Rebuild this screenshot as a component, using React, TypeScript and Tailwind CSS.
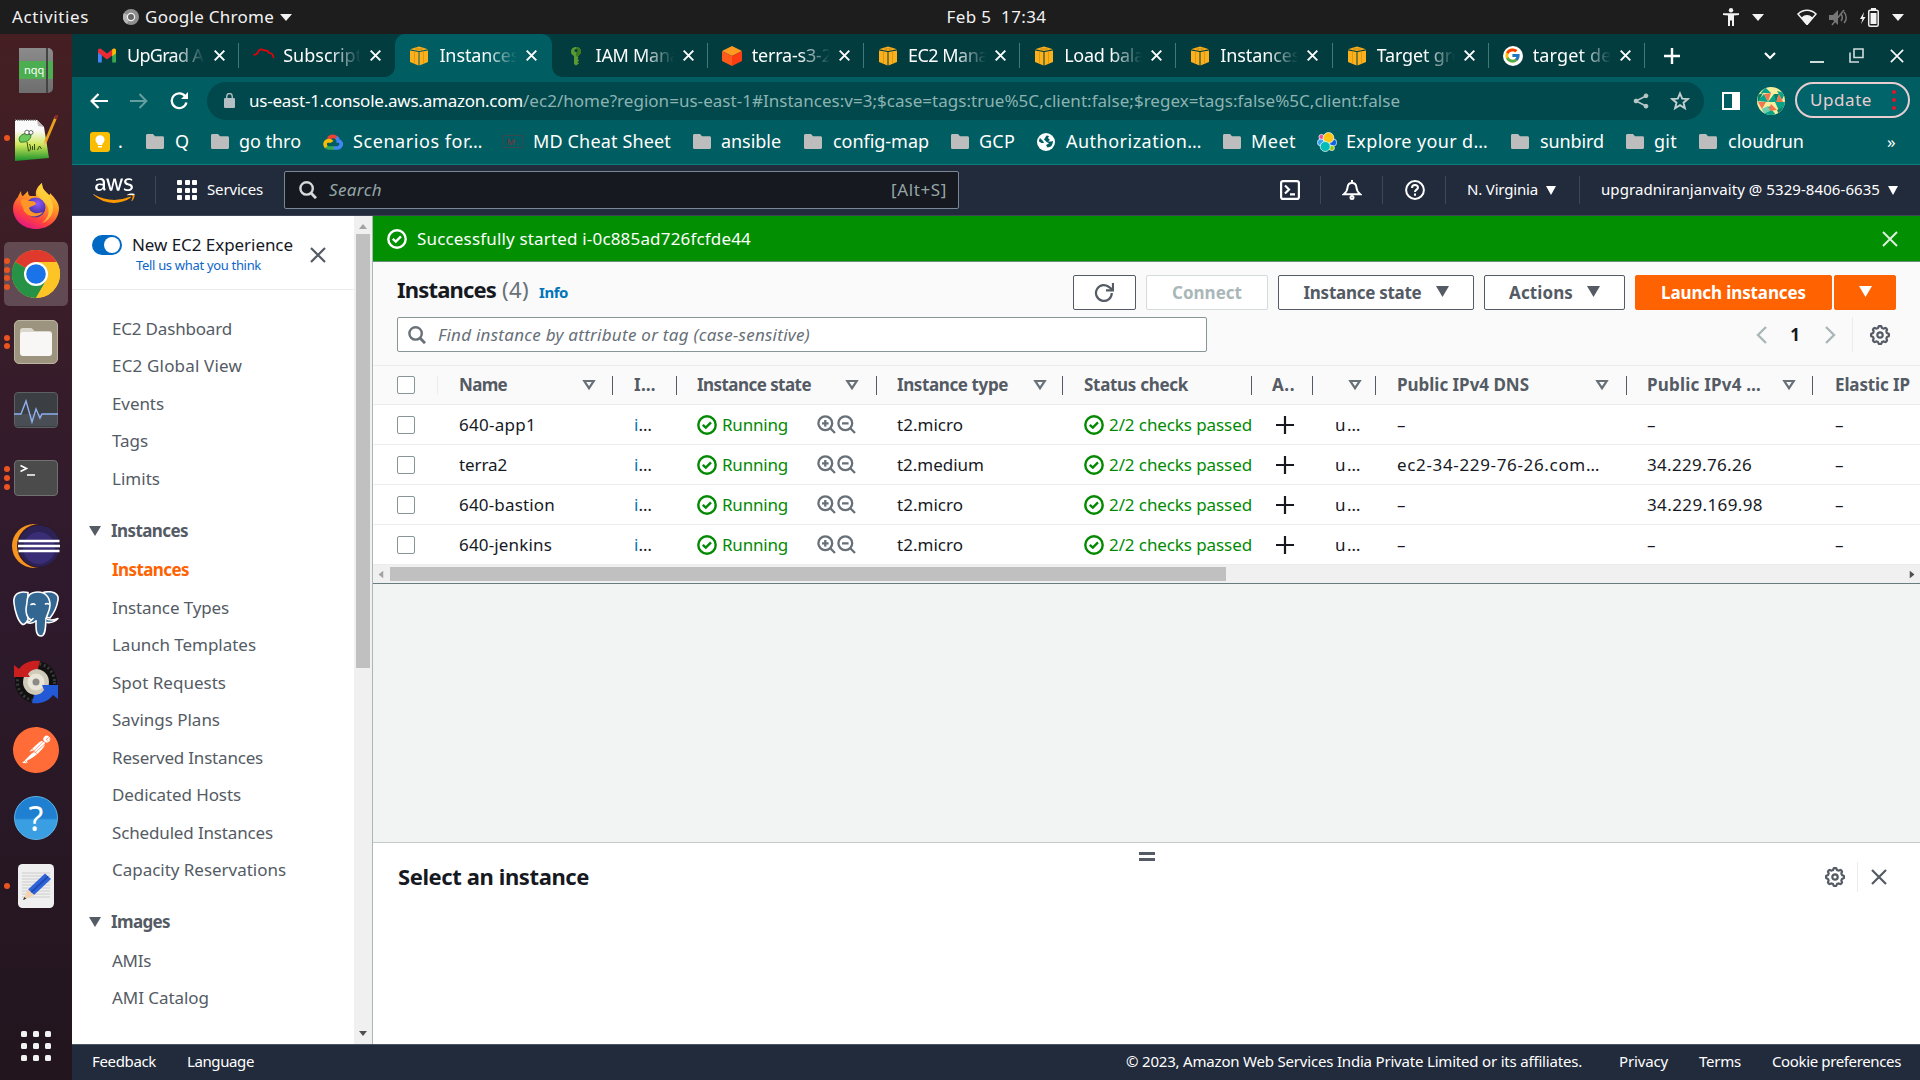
import { useLayoutEffect, useRef, type ReactNode } from "react";
import { SiPostman } from "react-icons/si";
import { FcGoogle } from "react-icons/fc";
import { FaAws } from "react-icons/fa";

/* Text that spreads its letters so that the run is exactly `w` pixels wide. */
function Fit({ w, className = "", children }: { w: number; className?: string; children: string }) {
  const ref = useRef<HTMLSpanElement>(null);
  useLayoutEffect(() => {
    const el = ref.current;
    if (!el) return;
    el.style.letterSpacing = "0px";
    const natural = el.getBoundingClientRect().width;
    el.style.letterSpacing = `${(w - natural) / children.length}px`;
  }, [w, children]);
  return (
    <span ref={ref} className={`inline-block shrink-0 whitespace-pre ${className}`}>
      {children}
    </span>
  );
}

/* ---------- small icons ---------- */

const Caret = ({ className = "" }: { className?: string }) => (
  <svg viewBox="0 0 12 10" preserveAspectRatio="none" className={`shrink-0 ${className}`} fill="currentColor">
    <path d="M0 0h12L6 10z" />
  </svg>
);

const SortIcon = () => (
  <svg viewBox="0 0 14 12" className="h-3 w-3.5 shrink-0 text-[#687078]" fill="none" stroke="currentColor" strokeWidth="2.200">
    <path d="M2.300 2h9.400L7 9.200z" />
  </svg>
);

const Cross = ({ className = "", sw = 2 }: { className?: string; sw?: number }) => (
  <svg viewBox="0 0 16 16" className={`shrink-0 ${className}`} fill="none" stroke="currentColor" strokeWidth={sw}>
    <path d="M1 1l14 14M15 1L1 15" />
  </svg>
);

const CheckCircle = () => (
  <svg viewBox="0 0 20 20" className="size-5 shrink-0" fill="none" stroke="currentColor" strokeWidth="2.400">
    <circle cx="10" cy="10" r="8.700" />
    <path d="M5.800 9.800l3 2.800 5.200-5.200" />
  </svg>
);

const Magnifier = ({ className = "" }: { className?: string }) => (
  <svg viewBox="0 0 18 18" className={`shrink-0 ${className}`} fill="none" stroke="currentColor" strokeWidth="2.400">
    <circle cx="7.600" cy="7.400" r="6.200" />
    <path d="M12 12l5 5.200" strokeWidth="2.800" />
  </svg>
);

const ZoomGlass = ({ plus = false }: { plus?: boolean }) => (
  <svg viewBox="0 0 19 19" className="size-[19px] shrink-0 text-[#687078]" fill="none" stroke="currentColor" strokeWidth="2.300">
    <circle cx="8.300" cy="8.300" r="6.900" />
    <path d="M13.300 13.300l4.700 4.700M5 8.300h6.600" />
    {plus && <path d="M8.300 5v6.600" />}
  </svg>
);

const gearPath =
  Array.from({ length: 97 }, (_, i) => {
    const a = (i / 96) * Math.PI * 2;
    const r = 8.1 + 0.95 * Math.tanh(2 * Math.cos(8 * a));
    return `${i ? "L" : "M"}${(10 + r * Math.sin(a)).toFixed(2)} ${(10 - r * Math.cos(a)).toFixed(2)}`;
  }).join("") + "z";

const Gear = () => (
  <svg viewBox="0 0 20 20" className="size-5 shrink-0 text-[#545b64]" fill="none" stroke="currentColor" strokeWidth="2.200">
    <path d={gearPath} />
    <circle cx="10" cy="10" r="2.700" />
  </svg>
);

/* ---------- favicons ---------- */

const CubeIcon = () => (
  <svg viewBox="0 0 20 20" className="size-5 shrink-0">
    <path d="M1 4.400l8.500 1.600V19.500L1 16zM19 4.400l-8.500 1.600V19.500L19 16z" fill="#fbb01c" />
    <path d="M1 3.200L10 .6l9 2.600L10 5z" fill="#fbb01c" />
    <path d="M5.500 5.500v12.300M14.500 5.500v12.300" stroke="#d8930f" strokeWidth=".8" />
    <path d="M5.500 1.900l9 2.200M14.500 1.900l-9 2.200" stroke="#c98a12" strokeWidth=".6" />
  </svg>
);

const GmailIcon = () => (
  <svg viewBox="0 0 20 16" className="h-4 w-5 shrink-0">
    <path d="M1 3v11.500h3.800V6z" fill="#4285f4" />
    <path d="M19 3v11.500h-3.800V6z" fill="#34a853" />
    <path d="M1 2.600C1 .6 3 0 4.600 1.200L10 5.400l5.400-4.200C17 0 19 .6 19 2.600v2L10 11.500 1 4.600z" fill="#ea2a35" />
    <path d="M15.200 1.400C17-.1 19 .7 19 2.700v2.600l-3.800 2.900z" fill="#fbbc04" />
  </svg>
);

const RedHatIcon = () => (
  <svg viewBox="0 0 22 20" className="h-5 w-[22px] shrink-0" fill="none" stroke="#e8000b" strokeWidth="1.700">
    <path d="M.5 9.500C2 8 3.500 9 4.500 7c.8-2 1.500-4 4-3.700 1.500.2 2 1.200 3.200 1C14 4.200 15.500 5 16 7c2.800 0 4.400 2 4.500 5" />
  </svg>
);

const KeyIcon = () => (
  <svg viewBox="0 0 20 20" className="size-5 shrink-0">
    <path d="M10 1C6.500 1 4.800 3.500 5 6c.2 2 1.500 3.400 3 3.900V18l2 1.500 3-2-1.500-1.500 1.700-1.500-1.700-1.500 1-1.300-1-1.800c2-.6 3.500-2.400 3.500-4.400C15 3 13 1 10 1z" fill="#5a9a32" />
    <path d="M10 1c3 0 5 2 5 5-.3 2-1.500 3.600-3.300 4.200H10z" fill="#3f7a22" />
    <circle cx="10" cy="4.600" r="1.500" fill="#023c3f" />
  </svg>
);

const S3Icon = () => (
  <svg viewBox="0 0 20 20" className="size-5 shrink-0">
    <path d="M10 0l10 5-10 5L0 5z" fill="#ff9a20" />
    <path d="M0 5l10 5v10L0 15z" fill="#ff5a1a" />
    <path d="M20 5l-10 5v10l10-5z" fill="#ff3d12" />
  </svg>
);

const GoogleIcon = () => (
  <span className="flex size-5 shrink-0 items-center justify-center rounded-full bg-white">
    <FcGoogle className="size-[17px]" />
  </span>
);

/* ---------- browser tabs ---------- */

const tabs: { title: string; w: number; icon: ReactNode; active?: boolean; line?: boolean }[] = [
  { title: "UpGrad A", w: 76, icon: <GmailIcon />, line: true },
  { title: "Subscript", w: 79, icon: <RedHatIcon /> },
  { title: "Instances", w: 80, icon: <CubeIcon />, active: true },
  { title: "IAM Mana", w: 84, icon: <KeyIcon />, line: true },
  { title: "terra-s3-2", w: 80, icon: <S3Icon />, line: true },
  { title: "EC2 Mana", w: 80, icon: <CubeIcon />, line: true },
  { title: "Load bala", w: 80, icon: <CubeIcon />, line: true },
  { title: "Instances", w: 80, icon: <CubeIcon />, line: true },
  { title: "Target gro", w: 86, icon: <CubeIcon />, line: true },
  { title: "target de", w: 79, icon: <GoogleIcon />, line: true },
];

function TabStrip() {
  return (
    <div className="flex h-[43px] shrink-0 items-center bg-[#023c3f] pl-[11px] text-white">
      {tabs.map((t, i) => (
        <div
          key={i}
          className={
            t.active
              ? "relative flex h-full w-[156.200px] items-center rounded-t-[10px] bg-[#005d61] pl-[14px]"
              : "relative flex h-full w-[156.200px] items-center pl-[14px]"
          }
        >
          {t.active && (
            <>
              <span className="absolute bottom-0 -left-2.5 size-2.5 bg-[radial-gradient(circle_at_0_0,transparent_9.500px,#005d61_10px)]" />
              <span className="absolute -right-2.5 bottom-0 size-2.5 bg-[radial-gradient(circle_at_100%_0,transparent_9.500px,#005d61_10px)]" />
            </>
          )}
          <span className="flex w-[30px] shrink-0 items-center">{t.icon}</span>
          <span className="w-[78px] overflow-hidden text-[18px] [mask-image:linear-gradient(to_right,#000_60%,transparent_100%)]">
            <Fit w={t.w}>{t.title}</Fit>
          </span>
          <Cross className="ml-[9px] size-[11px]" sw={2.800} />
          {t.line && <span className="absolute top-[9px] right-0 h-[25px] w-px bg-[#3f7a7b]" />}
        </div>
      ))}
      <div className="flex flex-1 items-center pl-[19px]">
        <svg viewBox="0 0 16 16" className="size-4" stroke="currentColor" strokeWidth="2.400">
          <path d="M8 0v16M0 8h16" />
        </svg>
        <svg viewBox="0 0 12 8" className="ml-[84px] h-2 w-3" fill="none" stroke="currentColor" strokeWidth="2.200">
          <path d="M1 1l5 5 5-5" />
        </svg>
        <span className="mt-3 ml-[34px] h-0.5 w-[14px] bg-[#cfdcdc]" />
        <svg viewBox="0 0 15 15" className="ml-[25px] size-[15px] text-[#cfdcdc]" fill="none" stroke="currentColor" strokeWidth="1.600">
          <path d="M5 1h9v8.500H5zM1 4.500V14h9" />
        </svg>
        <Cross className="ml-[26px] size-[14px]" sw={1.800} />
      </div>
    </div>
  );
}

const Avatar = () => (
  <svg viewBox="0 0 28 28" className="ml-[17px] size-7 shrink-0">
    <defs>
      <clipPath id="avatar">
        <circle cx="14" cy="14" r="14" />
      </clipPath>
    </defs>
    <g clipPath="url(#avatar)">
      <rect width="28" height="28" fill="#f6ee9c" />
      <path d="M8 0l6 6H4zM20 4l8 2-3 7zM0 14l7-7 4 8zM11 15l6-8 6 8zM18 15h10v7l-6 2zM6 28l6-9 7 9z" fill="#0aa38a" />
      <path d="M7 7l7-1-3 9zM22 7l4 8h-7zM1 15h8l-4 7zM14 17l6 6-9 1z" fill="#f0784f" />
      <path d="M0 8l6-2-5 9zM17 7l5 0-3 7zM20 23l6-3-4 8z" fill="#0b7f66" />
      <path d="M5 22l6-3 2 5-6 3z" fill="#6fd0b0" />
    </g>
  </svg>
);

function Toolbar() {
  return (
    <div className="flex h-[47px] shrink-0 items-center bg-[#005d61] text-white">
      <svg viewBox="0 0 18 16" className="ml-[18px] h-4 w-[18px]" fill="none" stroke="currentColor" strokeWidth="2.200">
        <path d="M18 8H2M8.500 1L1.600 8l6.900 7" />
      </svg>
      <svg viewBox="0 0 18 16" className="ml-[22px] h-4 w-[18px] text-[#669ea0]" fill="none" stroke="currentColor" strokeWidth="2">
        <path d="M0 8h16M9.500 1l6.900 7-6.900 7" />
      </svg>
      <svg viewBox="0 0 18 18" className="ml-[22px] size-[18px]" fill="none" stroke="currentColor" strokeWidth="2.300">
        <path d="M15.600 5A7.400 7.400 0 1 0 16.400 10.500" />
        <path d="M18 0v7h-7z" fill="currentColor" stroke="none" />
      </svg>
      <div className="ml-[19px] flex h-[38px] w-[1497px] items-center rounded-full bg-[#01484c] pr-[14px] pl-[17px] text-[17px]">
        <svg viewBox="0 0 12 15" className="mr-[14px] h-[15px] w-[11px] text-[#b4bfc4]" preserveAspectRatio="none">
          <rect y="5" width="12" height="10" rx="1.200" fill="currentColor" />
          <path d="M3 6V3.500a3 3 0 0 1 6 0V6" fill="none" stroke="currentColor" strokeWidth="1.500" />
        </svg>
        <Fit w={274}>us-east-1.console.aws.amazon.com</Fit>
        <Fit w={877} className="text-[#8cb3b2]">
          /ec2/home?region=us-east-1#Instances:v=3;$case=tags:true%5C,client:false;$regex=tags:false%5C,client:false
        </Fit>
        <svg viewBox="0 0 16 16" className="ml-auto size-4 text-[#b9c8c8]" fill="currentColor" stroke="currentColor">
          <path d="M13 3L3 8l10 5" fill="none" strokeWidth="1.600" />
          <circle cx="13" cy="2.800" r="1.900" />
          <circle cx="3" cy="8" r="1.900" />
          <circle cx="13" cy="13.200" r="1.900" />
        </svg>
        <svg viewBox="0 0 20 20" className="ml-[21px] size-5 text-[#c3d0d0]" fill="none" stroke="currentColor" strokeWidth="1.900">
          <path d="M10 2.500l2.200 5.200 5.600.4-4.300 3.600 1.400 5.500L10 14.200l-4.900 3 1.400-5.500L2.200 8.100l5.600-.4z" />
        </svg>
      </div>
      <span className="ml-[18px] box-border h-[18px] w-[18px] border-[2.500px] border-r-8 border-white" />
      <Avatar />
      <div className="mb-px ml-[10px] flex h-9 w-[115px] items-center rounded-full border-2 border-[#e9cdd0] bg-[#01646a] pl-[13px] text-[17px] text-[#e9cdd0]">
        <Fit w={62}>Update</Fit>
        <span className="ml-[20px] flex flex-col gap-1">
          <i className="size-1 rounded-full bg-[#e8132a]" />
          <i className="size-1 rounded-full bg-[#e8132a]" />
          <i className="size-1 rounded-full bg-[#e8132a]" />
        </span>
      </div>
    </div>
  );
}

/* ---------- bookmarks ---------- */

const Folder = () => (
  <svg viewBox="0 0 18 15" className="h-[15px] w-[18px] shrink-0">
    <path d="M0 1.500C0 .6.600 0 1.500 0H7l2 2.300h7.500c.9 0 1.500.6 1.500 1.500v9.700c0 .9-.6 1.500-1.500 1.500h-15C.6 15 0 14.400 0 13.500z" fill="#bdbdbd" />
  </svg>
);

const Keep = () => (
  <span className="flex size-5 items-center justify-center rounded-[3px] bg-[#fbbc04]">
    <svg viewBox="0 0 10 13" className="h-[13px] w-2.5" fill="#fff">
      <circle cx="5" cy="4.700" r="4.500" />
      <path d="M2.700 8h4.600v2H2.700zM3 11h4v1.600H3z" />
    </svg>
  </span>
);

const GCloud = () => (
  <svg viewBox="0 0 20 16" className="h-4 w-5" fill="none" strokeWidth="3.600">
    <path d="M5.500 5A5 5 0 0 1 14 4.500" stroke="#ea4335" />
    <path d="M13.500 3.500c1.500 1.200 1.700 2.500 1.700 3.500 2.600 0 3.600 2.500 2.800 4.700" stroke="#4285f4" />
    <path d="M18 11c-.6 2-2 3-4 3H10" stroke="#4285f4" />
    <path d="M11 14H6c-1.500 0-2.500-.5-3.200-1.600" stroke="#34a853" />
    <path d="M3.300 13C1 10.500 2 6.800 6 6.600c1.500 0 2.400.6 3 1.400" stroke="#fbbc04" />
  </svg>
);

const MdIcon = () => (
  <span className="flex h-[13px] w-5 items-center justify-center border border-[#39484b] text-[9px] font-bold text-[#5b3f44]">M↓</span>
);

const Globe = () => (
  <svg viewBox="0 0 18 18" className="size-[18px]">
    <circle cx="9" cy="9" r="9" fill="#fff" />
    <path d="M3 5l3 3 1 2H4.500L2 8.500C2 7 2.500 6 3 5zM9.500 2.500l2.500.5-1 2 2 2-2 1.500h3l2-.500c0 2-1 4.500-2.500 5.800l-3 .7L9 12l3-1.500-3-2-2-2z" fill="#005d61" />
  </svg>
);

const Elastic = () => (
  <svg viewBox="0 0 20 20" className="size-5" stroke="#fff" strokeWidth=".7">
    <circle cx="4.500" cy="5" r="2.600" fill="#f04e98" />
    <circle cx="3.800" cy="10.500" r="3.400" fill="#36a2ef" />
    <circle cx="16" cy="10.500" r="3.700" fill="#0b64dd" />
    <circle cx="14.800" cy="16" r="2.600" fill="#93c90e" />
    <circle cx="11.500" cy="5.800" r="5.300" fill="#fec514" />
    <circle cx="8.200" cy="14.500" r="5" fill="#02bcb7" />
  </svg>
);

const bookmarks: { t: string; w: number; cell: string; icon?: ReactNode }[] = [
  { t: ".", w: 5, cell: "w-[56px] gap-[8px]", icon: <Keep /> },
  { t: "Q", w: 14, cell: "w-[65px] gap-[11px]" },
  { t: "go thro", w: 62, cell: "w-[112px] gap-[10px]" },
  { t: "Scenarios for…", w: 130, cell: "w-[180px] gap-[10px]", icon: <GCloud /> },
  { t: "MD Cheat Sheet", w: 138, cell: "w-[190px] gap-[10px]", icon: <MdIcon /> },
  { t: "ansible", w: 60, cell: "w-[111px] gap-[10px]" },
  { t: "config-map", w: 96, cell: "w-[147px] gap-[11px]" },
  { t: "GCP", w: 36, cell: "w-[86px] gap-[10px]" },
  { t: "Authorization…", w: 136, cell: "w-[186px] gap-[11px]", icon: <Globe /> },
  { t: "Meet", w: 45, cell: "w-[94px] gap-[10px]" },
  { t: "Explore your d…", w: 142, cell: "w-[194px] gap-[9px]", icon: <Elastic /> },
  { t: "sunbird", w: 64, cell: "w-[115px] gap-[11px]" },
  { t: "git", w: 23, cell: "w-[73px] gap-[10px]" },
  { t: "cloudrun", w: 76, cell: "w-[188px] gap-[11px]" },
];

function Bookmarks() {
  return (
    <div className="flex h-[41px] shrink-0 items-center border-b border-[#0b7f7d] bg-[#005d61] pb-[5px] pl-[18px] text-[18px] text-white">
      {bookmarks.map((b) => (
        <div key={b.t} className={`flex shrink-0 items-center ${b.cell}`}>
          {b.icon ?? <Folder />}
          <Fit w={b.w}>{b.t}</Fit>
        </div>
      ))}
      <span className="text-[17px]">»</span>
    </div>
  );
}

/* ---------- desktop ---------- */

function TopBar() {
  return (
    <header className="grid h-[34px] shrink-0 grid-cols-3 items-center bg-[#1d1d1d] text-[17px] text-[#f2f2f2]">
      <div className="flex items-center pl-3">
        <Fit w={77}>Activities</Fit>
        <svg viewBox="0 0 16 16" className="ml-[34px] size-4">
          <circle cx="8" cy="8" r="8" fill="#8f8f8f" />
          <path d="M8 8L1 4a8 8 0 0 0 3 11z" fill="#b5b5b5" />
          <circle cx="8" cy="8" r="3.600" fill="#666" stroke="#f5f5f5" strokeWidth="1.200" />
        </svg>
        <Fit w={129} className="ml-[6px]">Google Chrome</Fit>
        <Caret className="ml-[6px] h-[7px] w-3" />
      </div>
      <div className="flex justify-center pl-[73px]">
        <Fit w={100}>Feb 5  17:34</Fit>
      </div>
      <div className="flex items-center justify-end pr-[16px]">
        <svg viewBox="0 0 16 18" className="h-[18px] w-4" fill="currentColor">
          <circle cx="8" cy="2.300" r="2.200" />
          <path d="M0 5.200h16v1.700l-5 .7V18H9v-5.500H7V18H5V7.600L0 6.900z" />
        </svg>
        <Caret className="ml-[13px] h-[7px] w-3" />
        <svg viewBox="0 0 20 16" className="ml-[33px] h-4 w-5" fill="none" stroke="currentColor" strokeWidth="1.500">
          <path d="M1 5a12.500 12.500 0 0 1 18 0l-9 10.500z" />
          <path d="M5 9c3-3 7-3 10 0l-5 6z" fill="currentColor" />
        </svg>
        <svg viewBox="0 0 19 17" className="ml-[12px] h-[17px] w-[19px] text-[#777]" fill="none" stroke="currentColor" strokeWidth="1.500">
          <path d="M0 6h4l5-5v15l-5-5H0z" fill="currentColor" stroke="none" />
          <path d="M12 5c1.500 2 1.500 5 0 7M15 3c3 3.500 3 8 0 11M3 16L15 1" />
        </svg>
        <svg viewBox="0 0 19 19" className="ml-[12px] h-[19px] w-[19px]">
          <path d="M4 4L0 11h2.500L1 16l4.500-7H3z" fill="currentColor" />
          <rect x="8.700" y="2.200" width="9.500" height="16" rx="1.500" fill="none" stroke="currentColor" strokeWidth="1.500" />
          <path d="M11 0h5v2h-5zM10.500 5h6v11h-6z" fill="currentColor" />
        </svg>
        <Caret className="ml-[13px] h-[7px] w-3" />
      </div>
    </header>
  );
}

const dock: { dots: number; active?: boolean; icon: ReactNode }[] = [
  {
    dots: 0,
    icon: (
      <div className="relative flex h-[45px] w-[34px] items-center overflow-hidden rounded-r-[5px] bg-gradient-to-b from-[#8b8b8b] to-[#6e6e6e]">
        <span className="h-[18px] w-full bg-[#4cae50] pl-[5px] text-[11px] leading-[17px] text-white">nqq</span>
        <span className="absolute inset-y-0 right-[5px] w-0.5 bg-[#444]" />
      </div>
    ),
  },
  {
    dots: 1,
    icon: (
      <svg viewBox="0 0 46 46" className="size-[46px]">
        <defs>
          <linearGradient id="pad" x2="0" y2="1">
            <stop offset=".25" stopColor="#fafafa" />
            <stop offset=".6" stopColor="#cfe85a" />
            <stop offset="1" stopColor="#18912b" />
          </linearGradient>
        </defs>
        <path d="M2 5h22l7 7 5 31-34 3z" fill="url(#pad)" />
        <path d="M24 5l7 7-6-1z" fill="#bbb" />
        <path d="M2 5h22" stroke="#666" strokeWidth="2" strokeDasharray="1 1.200" />
        <path d="M6 24c1-5 7-7 12-4 0 5-5 8-11 7z" fill="#6cc85a" stroke="#256b1c" strokeWidth=".8" />
        <circle cx="14" cy="17.500" r="2.300" fill="#fff" stroke="#333" strokeWidth=".7" />
        <circle cx="18" cy="17.500" r="2" fill="#fff" stroke="#333" strokeWidth=".7" />
        <path d="M14 27l1.500 9c2 0 3-3 1-7m3 6v-4m2 4v-6m3 6l2-4 2 3" fill="none" stroke="#414b12" strokeWidth="1" />
        <path d="M43 2L32 28" stroke="#e9a21c" strokeWidth="2.800" />
        <path d="M44 0l-1.500 4" stroke="#8d2b2b" strokeWidth="3" />
        <path d="M32.500 26l-2 5" stroke="#eac07b" strokeWidth="1.500" />
      </svg>
    ),
  },
  {
    dots: 0,
    icon: (
      <svg viewBox="0 0 46 46" className="size-[46px]">
        <defs>
          <linearGradient id="fox" x1=".8" y1="0" x2=".3" y2="1">
            <stop offset="0" stopColor="#ffe84a" />
            <stop offset=".4" stopColor="#ff9a24" />
            <stop offset=".75" stopColor="#ff4040" />
            <stop offset="1" stopColor="#e31587" />
          </linearGradient>
          <radialGradient id="orb" cx=".6" cy=".3">
            <stop offset="0" stopColor="#9059ff" />
            <stop offset="1" stopColor="#4a36a8" />
          </radialGradient>
        </defs>
        <path d="M5 14c1-3 2-4 3-6 0 3 1 5 2 5l5-5c0 4 1 5 3 5h5c-1-6 2-10 6-13 0 6 3 8 7 12 1 0 1-1 1-2 5 5 9 10 9 15 0 12-10 21-23 21S0 37 0 25c0-4 2-8 5-11z" fill="url(#fox)" />
        <path d="M24 11c1-6 2-8 5-11 0 6 3 8 7 12l3 7c4 10-3 19-10 21 8-6 8-14 4-19-3-4-6-5-9-10z" fill="#ffd23c" opacity=".8" />
        <circle cx="22.500" cy="24.500" r="10" fill="url(#orb)" />
        <path d="M8 17c4-2 6 1 9 1 4 0 6 1 6 3-1 2-4 1-7 4 2 6 9 6 14 4-4 6-15 6-19-1-1-3-1-5-3-7z" fill="#ff9626" />
      </svg>
    ),
  },
  {
    dots: 4,
    active: true,
    icon: (
      <svg viewBox="0 0 48 48" className="size-12">
        <circle cx="24" cy="24" r="24" fill="#fcc424" />
        <path d="M24 24L3.200 12A24 24 0 0 1 44.800 12z" fill="#e03a2f" />
        <path d="M24 24L3.200 12A24 24 0 0 0 24 48l10.400-18z" fill="#259246" />
        <path d="M24 12h20.800A24 24 0 0 1 24 48l10.400-18z" fill="#fcc424" />
        <circle cx="24" cy="24" r="12" fill="#fff" />
        <circle cx="24" cy="24" r="9.800" fill="#1a73e8" />
      </svg>
    ),
  },
  {
    dots: 2,
    icon: (
      <div className="flex size-11 items-center justify-center rounded-[5px] border border-[#bcb4a1] bg-[#9d9480]">
        <svg viewBox="0 0 32 28" className="h-7 w-8">
          <path d="M0 3c0-2 1-3 3-3h8c2 0 2 3 4 3h14c2 0 3 1 3 3H0z" fill="#dcd7cd" />
          <rect y="4" width="32" height="24" rx="3" fill="#f8f7f5" />
        </svg>
      </div>
    ),
  },
  {
    dots: 0,
    icon: (
      <svg viewBox="0 0 44 36" className="h-9 w-11">
        <rect x=".5" y=".5" width="43" height="35" rx="3.500" fill="#3b3e42" stroke="#5d6063" />
        <path d="M1 22h42v12H1z" fill="#494e55" />
        <path d="M0 22h7l5-13 6 21 4-13 4 9 2-4h16" fill="none" stroke="#8fb0ef" strokeWidth="1.400" />
      </svg>
    ),
  },
  {
    dots: 3,
    icon: (
      <svg viewBox="0 0 44 36" className="h-9 w-11">
        <rect x=".5" y=".5" width="43" height="35" rx="3.500" fill="#4b4b4b" stroke="#717171" />
        <path d="M6.500 5.500l6 3-6 3M13 15h8" fill="none" stroke="#fff" strokeWidth="1.600" />
      </svg>
    ),
  },
  {
    dots: 0,
    icon: (
      <svg viewBox="0 0 48 44" className="h-11 w-12">
        <circle cx="22" cy="22" r="22" fill="#f7941e" />
        <circle cx="27" cy="22" r="22" fill="#2e1a30" />
        <circle cx="27" cy="22" r="20.500" fill="#2c2255" />
        <circle cx="27" cy="24" r="16" fill="#42358a" opacity=".6" />
        <path d="M6.500 17h41M6 22h42M6.500 27h41" stroke="#fff" strokeWidth="2.500" />
      </svg>
    ),
  },
  {
    dots: 0,
    icon: (
      <svg viewBox="0 0 46 46" className="size-[46px]" fill="#336791" stroke="#fff" strokeWidth="1.600" strokeLinejoin="round" strokeLinecap="round">
        <path d="M15 1.500C6-.5 0 3 1 12c.8 8 4 18 8 21 2 1.500 4-1 6-4z" />
        <path d="M30 1.500C40-1 46 3 45 9c-1 7-4 13-8 18l-5-1z" />
        <path d="M14 11C14 4 18 1 25 1s12 5 12 13c0 6-3 9-4 14-.5 6 0 17-5 17-5.500 0-5-8-5-15-6 0-10-4-10-12z" />
        <path d="M23 30c-3 2.500-6 2.800-9 1.500 3-1 5-2 6-4" />
        <path d="M33 27.500c2 2 8 2 12 0-3 3-7 4.500-11 4" />
        <path d="M18 13.500c1.500-.8 3-.8 4 0M32.500 13c1-.6 2-.6 3 0" fill="none" />
      </svg>
    ),
  },
  {
    dots: 0,
    icon: (
      <svg viewBox="0 0 44 44" className="size-11">
        <circle cx="22" cy="22" r="21" fill="#111" />
        <circle cx="22" cy="22" r="18.500" fill="none" stroke="#3a3a3a" strokeWidth="3" strokeDasharray="2 2.500" />
        <circle cx="22" cy="22" r="13" fill="#cfc9b8" />
        <circle cx="22" cy="22" r="8.500" fill="#e9e5d8" />
        <circle cx="22" cy="22" r="3.500" fill="#8d8b85" />
        <path d="M0 5l5 4C10 2 18 0 26 1l-2 8c-5 0-8 2-10 5l2 3H0z" fill="#c9201f" />
        <path d="M44 39l-5-4c-5 7-13 9-21 8l2-8c5 0 8-2 10-5l-2-5h16z" fill="#2259d6" />
      </svg>
    ),
  },
  {
    dots: 0,
    icon: (
      <span className="relative flex size-[46px] items-center justify-center">
        <span className="absolute inset-1 rounded-full bg-white" />
        <SiPostman className="relative size-[46px] text-[#ff6c37]" />
      </span>
    ),
  },
  {
    dots: 0,
    icon: (
      <span className="flex size-11 items-center justify-center rounded-full border border-[#5db5ea] bg-gradient-to-b from-[#1f7fd0] from-50% to-[#3a9ee2] to-55% text-[34px] leading-none text-white">
        ?
      </span>
    ),
  },
  {
    dots: 1,
    icon: (
      <svg viewBox="0 0 36 44" className="h-11 w-9">
        <rect width="36" height="44" rx="4.500" fill="#efefef" />
        <path d="M4 9h28M4 12h28M4 15h28M4 18h28M4 21h28M4 24h28M4 27h28M4 30h28M4 33h28" stroke="#c4c4c4" strokeWidth=".8" />
        <path d="M27 9.500l6 5.500-17 16-6-5.500z" fill="#2d62d8" />
        <path d="M30 12.500L13 28.500" stroke="#1c46ab" strokeWidth="1.500" />
        <path d="M10 25.500l6 5.500-11 5z" fill="#f3d3ae" />
        <path d="M6.300 33l2 1.700L5 36z" fill="#333" />
      </svg>
    ),
  },
];

function Dock() {
  return (
    <nav className="flex w-[72px] shrink-0 flex-col items-center bg-gradient-to-b from-[#451f22] via-[#2f1a2d] to-[#22151d] pt-0.5">
      {dock.map((d, i) => (
        <div key={i} className="relative flex h-[68px] w-16 items-center justify-center">
          {d.active && <span className="absolute inset-x-0 inset-y-0.5 rounded-[5px] bg-white/20" />}
          <span className="absolute top-0 left-0 flex h-full flex-col items-center justify-center gap-[2.700px]">
            {Array.from({ length: d.dots }, (_, k) => (
              <i key={k} className="size-1.5 rounded-full bg-[#e95420]" />
            ))}
          </span>
          <span className="relative">{d.icon}</span>
        </div>
      ))}
      <div className="mt-auto mb-[19px] grid grid-cols-3 gap-[6px]">
        {Array.from({ length: 9 }, (_, k) => (
          <i key={k} className="size-1.5 rounded-[1.500px] bg-[#f2f2f2]" />
        ))}
      </div>
    </nav>
  );
}

/* ---------- AWS console ---------- */

const VLine = ({ className = "" }: { className?: string }) => <span className={`h-7 w-px shrink-0 bg-[#414750] ${className}`} />;

function ConsoleHeader() {
  return (
    <div className="flex h-[51px] shrink-0 items-center border-b border-[#3d4454] bg-[#222b3c] text-[15px] text-white">
      <svg width="0" height="0" className="absolute">
        <defs>
          <linearGradient id="aws" x2="0" y2="1">
            <stop offset=".67" stopColor="#fff" />
            <stop offset=".67" stopColor="#f90" />
          </linearGradient>
        </defs>
      </svg>
      <FaAws className="ml-[21px] h-[33px] w-[42px]" fill="url(#aws)" />
      <VLine className="ml-5" />
      <div className="ml-[21px] grid grid-cols-3 gap-[2.500px]">
        {Array.from({ length: 9 }, (_, k) => (
          <i key={k} className="size-[5px] rounded-[1px] bg-white" />
        ))}
      </div>
      <Fit w={56} className="mb-px ml-[10px]">Services</Fit>
      <div className="ml-[21px] flex h-[38px] w-[675px] items-center rounded-[2px] border border-[#7b8794] bg-[#161920] pr-[11px] pl-[14px] text-[17px] text-[#95a5a6]">
        <Magnifier className="size-[18px] text-[#d5dbdb]" />
        <Fit w={53} className="ml-[12px] italic">Search</Fit>
        <Fit w={56} className="ml-auto">[Alt+S]</Fit>
      </div>
      <svg viewBox="0 0 20 20" className="ml-[321px] size-5" fill="none" stroke="currentColor" strokeWidth="2.200">
        <rect x="1.100" y="1.100" width="17.800" height="17.800" rx="2" />
        <path d="M5 5.500L9 9.500 5 13.500M10 14.300h5" />
      </svg>
      <VLine className="ml-5" />
      <svg viewBox="0 0 20 20" className="ml-[21px] size-5" fill="none" stroke="currentColor" strokeWidth="2">
        <path d="M1.800 14.300h16.400c-2.500-2-3.600-4-3.800-7C14.200 4.500 12.500 3 10 3S5.800 4.500 5.600 7.300c-.2 3-1.300 5-3.800 7z" />
        <path d="M10 0v3" />
        <circle cx="10" cy="17.500" r="1.500" />
      </svg>
      <VLine className="ml-5" />
      <svg viewBox="0 0 20 20" className="ml-[22px] size-5" fill="none" stroke="currentColor" strokeWidth="2">
        <circle cx="10" cy="10" r="8.900" />
        <path d="M7 8c0-4 6-3.800 6-.5 0 2-3 2.300-3 4.500M10 13.500v2.200" />
      </svg>
      <VLine className="ml-5" />
      <Fit w={71} className="mb-px ml-[21px]">N. Virginia</Fit>
      <Caret className="ml-[8px] h-[9px] w-[10px]" />
      <VLine className="ml-[23px]" />
      <Fit w={279} className="mb-px ml-[21px]">upgradniranjanvaity @ 5329-8406-6635</Fit>
      <Caret className="ml-[8px] h-[9px] w-[10px]" />
    </div>
  );
}

const navTop: [string, number][] = [
  ["EC2 Dashboard", 120],
  ["EC2 Global View", 130],
  ["Events", 52],
  ["Tags", 36],
  ["Limits", 48],
];
const navInstances: [string, number][] = [
  ["Instances", 77],
  ["Instance Types", 117],
  ["Launch Templates", 144],
  ["Spot Requests", 114],
  ["Savings Plans", 108],
  ["Reserved Instances", 151],
  ["Dedicated Hosts", 129],
  ["Scheduled Instances", 161],
  ["Capacity Reservations", 174],
];
const navImages: [string, number][] = [
  ["AMIs", 39],
  ["AMI Catalog", 97],
];

function NavList({ items, selected }: { items: [string, number][]; selected?: string }) {
  return (
    <ul className="pl-10">
      {items.map(([t, w]) => (
        <li key={t} className={t === selected ? "flex h-[37.500px] items-center font-bold text-[#ff6200]" : "flex h-[37.500px] items-center"}>
          <Fit w={w}>{t}</Fit>
        </li>
      ))}
    </ul>
  );
}

function NavHeading({ w, children }: { w: number; children: string }) {
  return (
    <div className="flex h-10 items-center gap-[10px] pl-[17px] font-bold">
      <Caret className="h-[10px] w-3" />
      <Fit w={w}>{children}</Fit>
    </div>
  );
}

function Sidebar() {
  return (
    <aside className="flex w-[300px] shrink-0 bg-white text-[17px] text-[#545b64]">
      <div className="w-[282px] shrink-0">
        <div className="flex h-[74px] border-b border-[#eaeded] pl-5">
          <span className="mt-[19px] flex h-5 w-[30px] justify-end rounded-full bg-[#0069c4] p-[2px]">
            <i className="size-4 rounded-full bg-white" />
          </span>
          <div className="ml-[10px] flex w-[178px] flex-col items-start pt-[17px]">
            <Fit w={161} className="leading-[23px] text-[#16191f]">New EC2 Experience</Fit>
            <Fit w={125} className="ml-1 text-[13px] leading-[18px] text-[#0b66c8]">Tell us what you think</Fit>
          </div>
          <Cross className="mt-[31px] size-4 text-[#545b64]" sw={2.200} />
        </div>
        <div className="h-[19.500px]" />
        <NavList items={navTop} />
        <div className="h-[14px]" />
        <NavHeading w={77}>Instances</NavHeading>
        <NavList items={navInstances} selected="Instances" />
        <div className="h-[13px]" />
        <NavHeading w={59}>Images</NavHeading>
        <NavList items={navImages} />
      </div>
      <div className="flex w-[18px] flex-col items-center bg-[#f0f0f0]">
        <Caret className="mt-2 h-[5px] w-2 rotate-180 text-[#a3a3a3]" />
        <span className="mt-[5px] h-[434px] w-[14px] bg-[#c0c0c0]" />
        <Caret className="mt-auto mb-2 h-[5px] w-2 text-[#505050]" />
      </div>
    </aside>
  );
}

const cols = "grid grid-cols-[65px_175px_64px_200px_186px_189px_61px_63px_251px_186px_107px] items-center overflow-hidden";

function HeadCell({ w, t, sort, pad = "pl-[20px]" }: { w?: number; t?: string; sort?: string; pad?: string }) {
  return (
    <div className={`flex h-[19px] items-center border-r border-[#545b64] ${pad}`}>
      {t && w && <Fit w={w}>{t}</Fit>}
      {sort && (
        <span className={`ml-auto ${sort}`}>
          <SortIcon />
        </span>
      )}
    </div>
  );
}

const Checkbox = () => <span className="ml-[24px] block size-[18px] rounded-[2px] border-[1.500px] border-[#879596] bg-white" />;

const rows = [
  { name: "640-app1", nw: 77, type: "t2.micro", tw: 66, dns: "–", dw: 9, ip: "–", iw: 9 },
  { name: "terra2", nw: 48, type: "t2.medium", tw: 87, dns: "ec2-34-229-76-26.com…", dw: 203, ip: "34.229.76.26", iw: 105 },
  { name: "640-bastion", nw: 96, type: "t2.micro", tw: 66, dns: "–", dw: 9, ip: "34.229.169.98", iw: 116 },
  { name: "640-jenkins", nw: 93, type: "t2.micro", tw: 66, dns: "–", dw: 9, ip: "–", iw: 9 },
];

function InstanceTable() {
  return (
    <div className="text-[17px] text-[#16191f]">
      <div className={`${cols} h-[40px] border-y border-[#eaeded] bg-[#fafafa] font-bold text-[#545b64]`}>
        <div className="flex h-[19px] items-center border-r border-[#eaeded]">
          <Checkbox />
        </div>
        <HeadCell t="Name" w={48} sort="mr-[16px]" pad="pl-[21px]" />
        <HeadCell t="I…" w={22} pad="pl-[21px]" />
        <HeadCell t="Instance state" w={114} sort="mr-[17px]" />
        <HeadCell t="Instance type" w={111} sort="mr-[15px]" />
        <HeadCell t="Status check" w={104} pad="pl-[21px]" />
        <HeadCell t="A.." w={23} />
        <HeadCell sort="mr-[13px]" />
        <HeadCell t="Public IPv4 DNS" w={132} sort="mr-[17px]" pad="pl-[21px]" />
        <HeadCell t="Public IPv4 …" w={114} sort="mr-[16px]" />
        <div className="pl-[22px]">
          <Fit w={75}>Elastic IP</Fit>
        </div>
      </div>
      {rows.map((r) => (
        <div key={r.name} className={`${cols} h-10 border-b border-[#eaeded] bg-white`}>
          <Checkbox />
          <span className="pl-[21px]">
            <Fit w={r.nw}>{r.name}</Fit>
          </span>
          <span className="pl-[21px]">
            <span className="text-[#0073bb]">i</span>
            <Fit w={18}>…</Fit>
          </span>
          <span className="flex items-center pl-[20px] text-[#038a03]">
            <CheckCircle />
            <Fit w={66} className="ml-[5px]">Running</Fit>
            <span className="ml-[29px] flex gap-px">
              <ZoomGlass plus />
              <ZoomGlass />
            </span>
          </span>
          <span className="pl-[20px]">
            <Fit w={r.tw}>{r.type}</Fit>
          </span>
          <span className="flex items-center overflow-hidden pl-[21px] text-[#038a03]">
            <CheckCircle />
            <Fit w={143} className="ml-[5px]">2/2 checks passed</Fit>
          </span>
          <svg viewBox="0 0 18 18" className="ml-[24px] size-[18px]" stroke="currentColor" strokeWidth="2.200">
            <path d="M9 0v18M0 9h18" />
          </svg>
          <span className="pl-[22px]">
            <Fit w={27}>u…</Fit>
          </span>
          <span className="pl-[21px]">
            <Fit w={r.dw}>{r.dns}</Fit>
          </span>
          <span className="pl-[20px]">
            <Fit w={r.iw}>{r.ip}</Fit>
          </span>
          <span className="pl-[22px]">–</span>
        </div>
      ))}
      <div className="flex h-[18px] items-center bg-[#f0f0f0] px-1">
        <Caret className="h-[5px] w-2 rotate-90 text-[#a3a3a3]" />
        <span className="ml-[5px] h-[14px] w-[836px] bg-[#c0c0c0]" />
        <Caret className="ml-auto h-[5px] w-2 -rotate-90 text-[#505050]" />
      </div>
    </div>
  );
}

function Main() {
  return (
    <main className="flex min-w-0 flex-1 flex-col border-l border-[#aab7b8] bg-[#f2f3f3]">
      <div className="flex h-[46px] shrink-0 items-center border-b border-[#6b8f76] bg-[#029002] pr-[22px] pl-[14px] text-[17px] text-white">
        <CheckCircle />
        <Fit w={334} className="ml-[10px]">Successfully started i-0c885ad726fcfde44</Fit>
        <Cross className="ml-auto size-4 text-[#dcefdc]" />
      </div>
      <div className="h-[103px] shrink-0 bg-[#fafafa] pr-6 pl-6">
        <div className="flex h-[55px] items-start pt-[13px] text-[17px] font-bold">
          <Fit w={99} className="-mt-px text-[22px] leading-[30px] text-[#16191f]">Instances</Fit>
          <Fit w={27} className="-mt-px ml-[6px] text-[22px] leading-[30px] font-normal text-[#687078]">(4)</Fit>
          <Fit w={29} className="-mt-px ml-[10px] text-[15px] leading-[36px] text-[#0073bb]">Info</Fit>
          <div className="ml-auto flex h-[35px] items-stretch text-[#545b64] *:flex *:items-center *:justify-center *:rounded-[2px] *:border-[1.500px] *:border-[#545b64] *:bg-white">
            <div className="w-[63px] pr-[2px]">
              <svg viewBox="0 0 20 20" className="size-5" fill="none" stroke="currentColor" strokeWidth="2.200">
                <path d="M17.800 10A7.900 7.900 0 1 1 15.500 4.400L18.500 6.600" />
                <path d="M19 0v7.400h-7" />
              </svg>
            </div>
            <div className="ml-[10px] w-[122px] !border-[#d5dbdb] text-[#aab7b8]">
              <Fit w={70}>Connect</Fit>
            </div>
            <div className="ml-[10px] w-[196px] gap-[14px]">
              <Fit w={118}>Instance state</Fit>
              <Caret className="mb-0.5 h-[11px] w-[13px]" />
            </div>
            <div className="ml-[10px] w-[141px] gap-[14px]">
              <Fit w={64}>Actions</Fit>
              <Caret className="mb-0.5 h-[11px] w-[13px]" />
            </div>
            <div className="ml-[10px] w-[197px] !border-[#ff6200] !bg-[#ff6200] text-white">
              <Fit w={145}>Launch instances</Fit>
            </div>
            <div className="ml-[2px] w-[62px] !border-[#ff6200] !bg-[#ff6200] text-white">
              <Caret className="mb-0.5 h-[11px] w-[13px]" />
            </div>
          </div>
        </div>
        <div className="flex h-[35px] items-center">
          <div className="flex h-[35px] w-[810px] items-center rounded-[2px] border-[1.500px] border-[#879596] bg-white pl-[10px] text-[17px] text-[#687078] italic">
            <Magnifier className="size-[18px]" />
            <Fit w={372} className="ml-[12px]">Find instance by attribute or tag (case-sensitive)</Fit>
          </div>
          <svg viewBox="0 0 11 18" className="ml-auto h-[18px] w-[11px] text-[#aab7b8]" fill="none" stroke="currentColor" strokeWidth="2.400">
            <path d="M10 1L2 9l8 8" />
          </svg>
          <span className="ml-[23px] w-[10px] text-center text-[17px] font-bold text-[#16191f]">1</span>
          <svg viewBox="0 0 11 18" className="ml-[25px] h-[18px] w-[11px] text-[#aab7b8]" fill="none" stroke="currentColor" strokeWidth="2.400">
            <path d="M1 1l8 8-8 8" />
          </svg>
          <span className="mr-[17px] ml-[16px] h-[35px] w-px bg-[#eaeded]" />
          <span className="mr-[6px]">
            <Gear />
          </span>
        </div>
      </div>
      <InstanceTable />
      <div className="flex-1 border-t border-[#6b7c80] bg-[#f2f3f3]" />
      <section className="h-[202px] shrink-0 border-t border-[#c3cacc] bg-white pr-[33px] pl-[25px]">
        <div className="flex h-[18px] flex-col items-center justify-end gap-[3px] pl-[8px]">
          <i className="h-[3px] w-4 bg-[#545b64]" />
          <i className="h-[3px] w-4 bg-[#545b64]" />
        </div>
        <div className="flex h-[31px] items-center">
          <Fit w={191} className="text-[22px] font-bold text-[#16191f]">Select an instance</Fit>
          <span className="mr-[12px] ml-auto">
            <Gear />
          </span>
          <span className="mr-[13px] h-[30px] w-px bg-[#eaeded]" />
          <Cross className="size-4 text-[#545b64]" sw={2.200} />
        </div>
      </section>
    </main>
  );
}

function Footer() {
  return (
    <footer className="flex h-9 shrink-0 items-center border-t border-[#4a5461] bg-[#222b3c] pr-[19px] pb-[2px] pl-5 text-[15px] text-white">
      <Fit w={64}>Feedback</Fit>
      <Fit w={67} className="ml-[31px]">Language</Fit>
      <Fit w={456} className="ml-auto">© 2023, Amazon Web Services India Private Limited or its affiliates.</Fit>
      <Fit w={49} className="ml-[37px]">Privacy</Fit>
      <Fit w={42} className="ml-[31px]">Terms</Fit>
      <Fit w={129} className="ml-[31px]">Cookie preferences</Fit>
    </footer>
  );
}

export default function App() {
  return (
    <div className="flex h-[1080px] w-[1920px] flex-col overflow-hidden font-['Noto_Sans',sans-serif]">
      <TopBar />
      <div className="flex min-h-0 flex-1">
        <Dock />
        <div className="flex w-[1848px] flex-col">
          <TabStrip />
          <Toolbar />
          <Bookmarks />
          <ConsoleHeader />
          <div className="flex min-h-0 flex-1">
            <Sidebar />
            <Main />
          </div>
          <Footer />
        </div>
      </div>
    </div>
  );
}
